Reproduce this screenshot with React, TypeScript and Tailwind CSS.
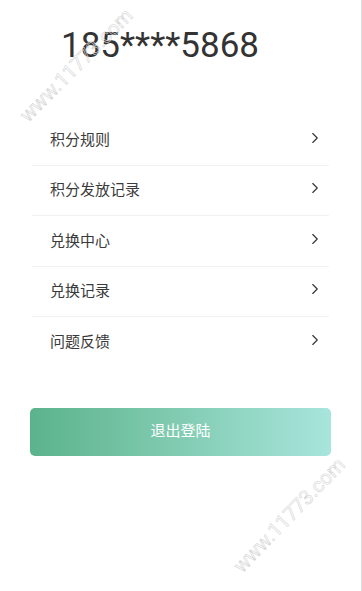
import { ChevronRight } from 'lucide-react'

const menuItems = ['积分规则', '积分发放记录', '兑换中心', '兑换记录', '问题反馈']

function Watermark({ className }: { className: string }) {
  return (
    <span
      className={`pointer-events-none absolute w-[166px] origin-center text-center text-[20px] leading-[24px] whitespace-nowrap text-transparent select-none [-webkit-text-stroke:0.6px_#d6d6d6] ${className}`}
      style={{ fontFamily: 'Roboto, "Liberation Sans", sans-serif' }}
    >
      www.11773.com
    </span>
  )
}

export default function App() {
  return (
    <div
      className="relative h-[591px] w-[362px] overflow-hidden border-r border-[#dcdcdc] bg-white"
      style={{ fontFamily: 'Roboto, "Noto Sans CJK SC", "Liberation Sans", sans-serif' }}
    >
      <div className="pt-[24px] pl-[61px]">
        <p className="text-[35px] leading-[44px] text-[#333333]">185****5868</p>
      </div>

      <ul className="mx-[32px] mt-[47px]">
        {menuItems.map((item, index) => (
          <li
            key={item}
            className={`flex h-[50.5px] items-center justify-between pr-[5px] pl-[18px] ${
              index < menuItems.length - 1 ? 'border-b border-[#f1f1f1]' : ''
            }`}
          >
            <span className="text-[15px] text-[#3a3a3a]">{item}</span>
            <ChevronRight className="-mt-[4px] h-[18px] w-[18px] text-[#333333]" strokeWidth={1.5} />
          </li>
        ))}
      </ul>

      <div className="mx-[30px] mt-[40px]">
        <button
          type="button"
          className="flex h-[48px] w-full items-center justify-center rounded-[5px] bg-gradient-to-r from-[#5bb38b] to-[#a8e5dc] text-[15px] text-white"
        >
          退出登陆
        </button>
      </div>

      <Watermark className="top-[53px] -left-[7px] -rotate-45" />
      <Watermark className="top-[503px] left-[206px] -rotate-[46deg]" />
    </div>
  )
}
